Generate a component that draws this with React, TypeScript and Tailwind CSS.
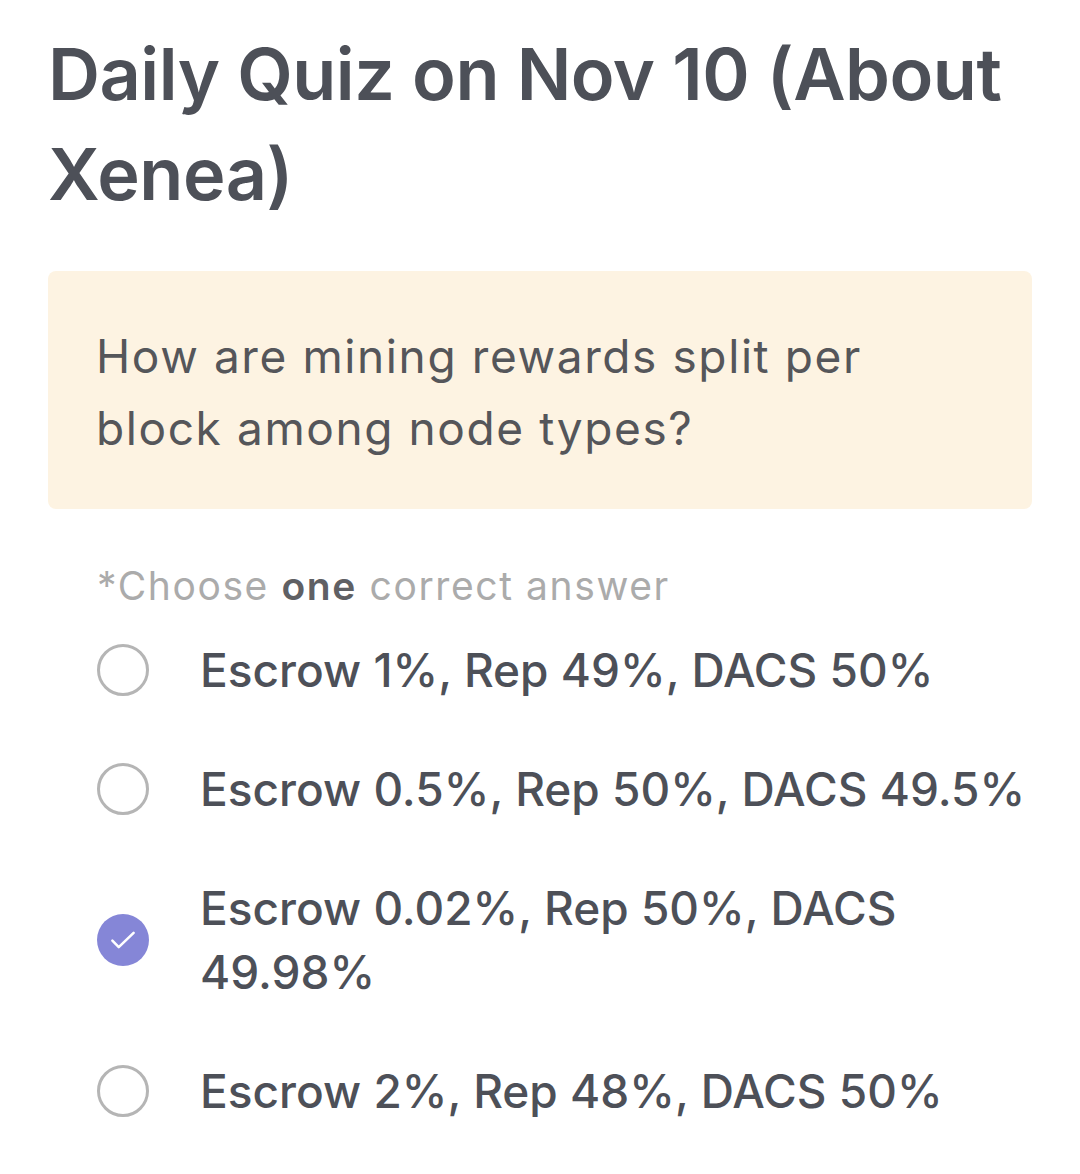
import React, { useState } from 'react';

const options = [
  'Escrow 1%, Rep 49%, DACS 50%',
  'Escrow 0.5%, Rep 50%, DACS 49.5%',
  'Escrow 0.02%, Rep 50%, DACS 49.98%',
  'Escrow 2%, Rep 48%, DACS 50%',
];

const App: React.FC = () => {
  const [selected, setSelected] = useState(2);

  return (
    <div className="min-h-[1174px] w-[1080px] bg-white pt-[24px] font-['Inter','Noto_Sans',sans-serif] text-[#4d5058]">
      <h1 className="px-12 text-[72px] font-semibold leading-[100px] tracking-[-0.5px]">
        Daily Quiz on Nov 10 (About Xenea)
      </h1>

      <div className="mx-12 mt-[47px] rounded-lg bg-[#fdf3e2] pl-12 pr-[120px] pt-[49px] pb-[45px]">
        <p className="text-[46px] leading-[72px] tracking-[1.6px] text-[#55565a]">
          How are mining rewards split per block among node types?
        </p>
      </div>

      <div className="pl-[97px] pr-[30px] pt-[52px]">
        <p className="text-[39px] leading-[50px] tracking-[1.6px] text-[#ababab]">
          *Choose <span className="font-semibold text-[#5f6064]">one</span> correct answer
        </p>

        <div className="mt-[27px] flex flex-col gap-[55px]">
          {options.map((opt, i) => (
            <button
              key={i}
              type="button"
              onClick={() => setSelected(i)}
              className="flex items-center text-left"
            >
              <span className="flex w-[103px] shrink-0 items-center">
                {selected === i ? (
                  <span className="flex h-[52px] w-[52px] items-center justify-center rounded-full bg-[#8586d7]">
                    <svg className="h-[34px] w-[34px]" viewBox="0 0 24 24" fill="none" stroke="white" strokeWidth="1.8" strokeLinecap="round" strokeLinejoin="round">
                      <path d="M4.5 12.5l4.5 4.5L19.5 7" />
                    </svg>
                  </span>
                ) : (
                  <span className="h-[52px] w-[52px] rounded-full border-[3px] border-[#b5b5b5]" />
                )}
              </span>
              <span className="text-[46px] font-medium leading-[64px] text-[#4d5058]">{opt}</span>
            </button>
          ))}
        </div>
      </div>
    </div>
  );
};

export default App;
